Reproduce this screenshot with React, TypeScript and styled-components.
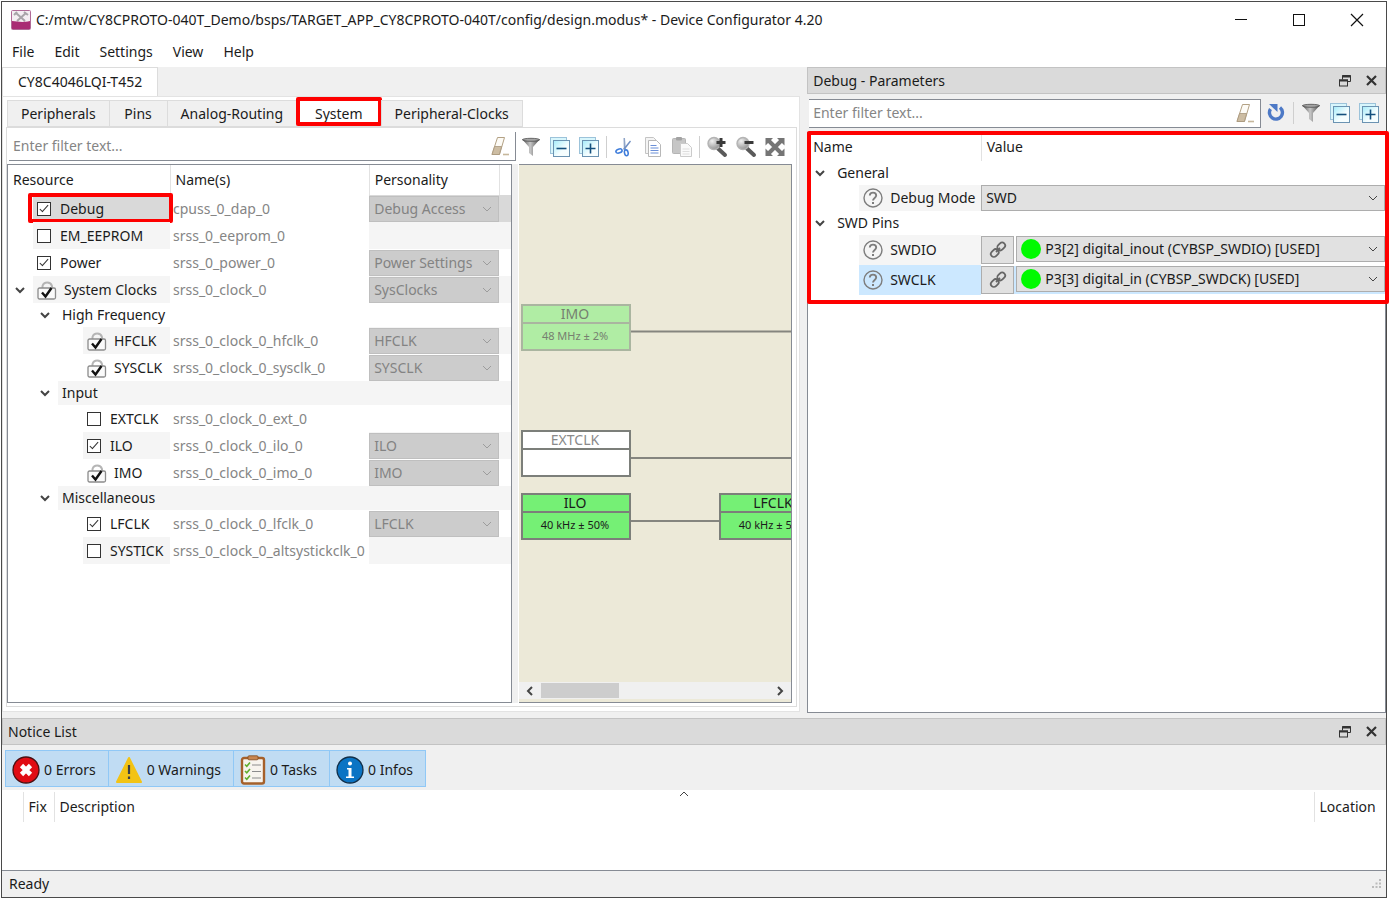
import React from "react";
import styled, { createGlobalStyle, css } from "styled-components";

const GlobalStyle = createGlobalStyle`
  *, *::before, *::after { box-sizing: border-box; }
  body { margin: 0; background: #fff; }
  body, button, input, select, table {
    font-family: "Noto Sans", "Open Sans", sans-serif;
    font-size: 14px;
    line-height: 20px;
    color: #1b1b1b;
  }
  button { border: 0; padding: 0; background: none; cursor: default; }
  table { border-collapse: collapse; border-spacing: 0; }
  td, th { padding: 0; text-align: left; font-weight: 400; }
  svg { display: block; flex: none; }
`;

/* ---------- Window frame ---------- */

const Page = styled.div`
  min-height: 100vh;
  padding: 1px 3px 1px 1px;
  display: flex;
`;
const AppWindow = styled.div`
  flex: 1;
  min-width: 0;
  display: flex;
  flex-direction: column;
  border: 1px solid #4a4a4a;
  background: #f0f0f0;
`;
const TitleBar = styled.header`
  display: flex;
  align-items: center;
  height: 36px;
  padding-left: 9px;
  background: #fff;
`;
const WindowTitle = styled.h1`
  flex: 1;
  margin: 0 0 0 5px;
  font-size: 14px;
  font-weight: 400;
  white-space: nowrap;
`;
const WindowButton = styled.button`
  width: 58px;
  height: 36px;
  display: grid;
  place-items: center;
`;
const MenuBar = styled.nav`
  display: flex;
  height: 29px;
  background: #fff;
`;
const MenuItem = styled.button`
  padding: 0 10px 2px;
`;
const Workspace = styled.main`
  flex: 1;
  display: flex;
  gap: 7px;
  min-height: 0;
`;

/* ---------- Left side ---------- */

const DevicePane = styled.section`
  flex: 797 1 0;
  min-width: 0;
  display: flex;
  flex-direction: column;
`;
const DeviceTabs = styled.div`
  display: flex;
  height: 29px;
`;
const DeviceTab = styled.button`
  padding: 0 15px;
  background: #fff;
  border: 1px solid #dcdcdc;
  border-bottom: 0;
`;
const DeviceBody = styled.div`
  flex: 1;
  display: flex;
  flex-direction: column;
  padding: 3px 2px 4px 3px;
  margin-bottom: 6px;
  background: #fff;
  border: 1px solid #e3e3e3;
`;
const SectionTabs = styled.div`
  display: flex;
  height: 27px;
  padding-left: 1px;
`;
const SectionTab = styled.button<{ $active?: boolean }>`
  position: relative;
  min-width: 58px;
  padding: 0 13px;
  border: 1px solid #dcdcdc;
  border-right-width: 0;
  background: ${(p) => (p.$active ? "#fff" : "#f0f0f0")};
  &:last-child { border-right-width: 1px; }
  ${(p) =>
    p.$active &&
    css`
      padding: 0 18px;
      &::after {
        content: "";
        position: absolute;
        inset: -4px -1px 0;
        border: 4px solid #fe0000;
        border-radius: 2px;
      }
    `}
`;
const SectionBody = styled.div`
  flex: 1;
  display: flex;
  flex-direction: column;
  padding: 4px 4px 3px 0;
  border: 1px solid #dcdcdc;
`;
const FilterRow = styled.div`
  display: flex;
  align-items: center;
  padding: 0 3px 0 2px;
`;
const FilterBox = styled.div`
  flex: 1;
  min-width: 0;
  display: flex;
  align-items: center;
  height: 29px;
  padding: 0 5px 0 4px;
  background: #fff;
  border-right: 1px solid #868b94;
  border-bottom: 1px solid #868b94;
`;
const BorderedFilterBox = styled(FilterBox)`
  border-top: 1px solid #868b94;
`;
const FilterInput = styled.input`
  flex: 1;
  min-width: 0;
  padding: 0;
  border: 0;
  outline: 0;
  background: transparent;
  &::placeholder { color: #858585; opacity: 1; }
`;
const ToolButton = styled.button`
  width: 29px;
  height: 29px;
  display: grid;
  place-items: center;
`;
const ToolDivider = styled.span`
  width: 6px;
  height: 22px;
  display: flex;
  justify-content: center;
  &::before { content: ""; width: 1px; background: #cfcfcf; }
`;
const SplitRow = styled.div`
  flex: 1;
  display: flex;
  margin-top: 3px;
`;
const ResourcePane = styled.div`
  flex: 505 1 0;
  min-width: 0;
  background: #fff;
  border: 1px solid #868b94;
`;
const Splitter = styled.div`
  width: 6px;
  margin-right: 1px;
  background: #f0f0f0;
`;

/* ---------- Trees ---------- */

const TreeTable = styled.table`
  width: 100%;
  table-layout: fixed;
`;
const Head = styled.th<{ $h: number }>`
  position: relative;
  height: ${(p) => p.$h}px;
  padding: 0 5px;
  border-right: 1px solid #e2e2e2;
  &:last-child { border-right: 0; }
`;
const Row = styled.tr<{ $h: number }>`
  height: ${(p) => p.$h}px;
`;
const Tree = styled.div<{ $h: number }>`
  position: relative;
  display: flex;
  height: ${(p) => p.$h}px;
`;
const Indent = styled.span<{ $w: number }>`
  width: ${(p) => p.$w}px;
  display: flex;
  align-items: center;
  justify-content: flex-end;
  padding-right: 8px;
`;
const NameLabel = styled.label<{ $bg: string; $gap: number }>`
  flex: 1;
  display: flex;
  align-items: center;
  gap: ${(p) => p.$gap}px;
  padding-left: 4px;
  background: ${(p) => p.$bg};
  white-space: nowrap;
`;
const Highlight = styled.span`
  position: absolute;
  inset: -2px -3px -1px 20px;
  border: 4px solid #fe0000;
  border-radius: 2px;
  pointer-events: none;
`;
const NameCell = styled.td`
  padding-left: 3px;
  color: #858585;
  white-space: nowrap;
`;
const Shade = styled.td<{ $bg: string }>`
  background: ${(p) => p.$bg};
`;
const CheckBox = styled.input`
  appearance: none;
  position: relative;
  flex: none;
  width: 14px;
  height: 14px;
  margin: 0;
  border: 1px solid #333;
  background: #fff;
  &:checked::after {
    content: "";
    position: absolute;
    left: 4px;
    top: 0;
    width: 4px;
    height: 9px;
    border: solid #333;
    border-width: 0 1px 1px 0;
    transform: rotate(42deg);
  }
`;
const LockSlot = styled.span`
  display: grid;
  & > * { grid-area: 1 / 1; }
  input { margin: 0; opacity: 0; width: 20px; height: 20px; }
`;
const SelectBox = styled.div<{ $off?: boolean; $h: number }>`
  display: flex;
  align-items: center;
  flex: 1;
  min-width: 0;
  height: ${(p) => p.$h}px;
  padding: 0 6px 0 4px;
  border: 1px solid ${(p) => (p.$off ? "#bfbfbf" : "#adadad")};
  background: ${(p) => (p.$off ? "#cccccc" : "#e1e1e1")};
`;
const PlainSelect = styled.select`
  appearance: none;
  flex: 1;
  min-width: 0;
  padding: 0;
  border: 0;
  background: transparent;
  opacity: 1;
  &:disabled { color: #838383; opacity: 1; }
`;

/* ---------- Diagram ---------- */

const DiagramPane = styled.div`
  flex: 273 1 0;
  min-width: 0;
  display: flex;
  flex-direction: column;
  padding-bottom: 3px;
  background: #ece9d8;
  border: solid #868b94;
  border-width: 1px 1px 1px 0;
`;
const Canvas = styled.div`
  flex: 1;
  overflow: hidden;
`;
const ScrollBar = styled.div`
  display: flex;
  align-items: center;
  height: 17px;
  background: #f0f0f0;
`;
const ScrollButton = styled.button`
  width: 22px;
  height: 17px;
  display: grid;
  place-items: center;
`;
const ScrollTrack = styled.div`
  flex: 1;
  height: 15px;
`;
const ScrollThumb = styled.div`
  width: 34%;
  height: 15px;
  background: #cdcdcd;
`;

/* ---------- Docks ---------- */

const ParamDock = styled.aside`
  flex: 578 1 0;
  min-width: 0;
  display: flex;
  flex-direction: column;
  margin-bottom: 5px;
`;
const DockTitle = styled.div`
  display: flex;
  align-items: center;
  height: 27px;
  padding: 0 1px 0 5px;
  border: 1px solid #c3c3c3;
  background: #dadada;
`;
const DockName = styled.h2`
  flex: 1;
  margin: 0;
  font-size: 14px;
  font-weight: 400;
`;
const DockButton = styled.button`
  width: 26px;
  height: 25px;
  display: grid;
  place-items: center;
`;
const ParamToolbar = styled.div`
  display: flex;
  align-items: center;
  height: 38px;
  padding: 0 3px 0 2px;
`;
const ParamBody = styled.div`
  flex: 1;
  background: #fff;
  border: 1px solid #868b94;
`;
const ParamMarked = styled.div`
  position: relative;
  height: 171px;
  &::after {
    content: "";
    position: absolute;
    inset: -2px -4px 0 -1px;
    border: 4px solid #fe0000;
    border-radius: 2px;
    pointer-events: none;
  }
`;
const ValueRow = styled.div<{ $bg?: string }>`
  display: flex;
  gap: 2px;
  background: ${(p) => p.$bg || "transparent"};
`;
const LinkButton = styled.button`
  width: 33px;
  height: 28px;
  display: grid;
  place-items: center;
  border: 1px solid #adadad;
  background: #e1e1e1;
`;
const Dot = styled.span`
  width: 20px;
  height: 20px;
  margin-right: 4px;
  border-radius: 50%;
  background: #00fa00;
`;

const NoticeDock = styled.section`
  background: #f0f0f0;
`;
const NoticeTools = styled.div`
  display: flex;
  height: 45px;
  padding: 5px 3px 3px;
`;
const NoticeButton = styled.button`
  display: flex;
  align-items: center;
  gap: 4px;
  padding: 3px 12px 0 6px;
  border: 1px solid #90c8f6;
  border-right-width: 0;
  background: #c0dcf3;
  &:last-child { border-right-width: 1px; }
`;
const NoticeBody = styled.div`
  height: 81px;
  padding-top: 2px;
  background: #fff;
  border-bottom: 1px solid #868b94;
`;
const SortMark = styled.span`
  position: absolute;
  left: calc(50% - 5px);
  top: -3px;
`;
const StatusBar = styled.footer`
  display: flex;
  align-items: center;
  justify-content: space-between;
  height: 26px;
  padding: 0 4px 0 7px;
`;

/* ---------- Icons ---------- */

const Chevron = ({ color = "#444", w = 2, dir = "down" }: { color?: string; w?: number; dir?: string }) => {
  const paths: Record<string, string> = {
    down: "M1 3l4 4 4-4",
    up: "M1 7l4-4 4 4",
    left: "M7 1L3 5l4 4",
    right: "M3 1l4 4-4 4",
  };
  return (
    <svg width="10" height="10" viewBox="0 0 10 10" fill="none" stroke={color} strokeWidth={w}>
      <path d={paths[dir]} />
    </svg>
  );
};

const AppIcon = () => (
  <svg width="20" height="20" viewBox="0 0 20 20">
    <rect x="0.5" y="0.5" width="19" height="19" rx="1" fill="#f4eef2" stroke="#b06a97" />
    <path d="M5 3l9 8M15 3l-9 8" stroke="#a8a4a8" strokeWidth="2" />
    <path d="M3 5l3-3M13 2l4 3" stroke="#a8a4a8" strokeWidth="2" />
    <path d="M1 11c5 0 9 2 18 0v8H1z" fill="#a92c74" />
  </svg>
);

const Eraser = () => (
  <svg width="20" height="20" viewBox="0 0 20 20">
    <path d="M7.500 1.500h7l-5 17h-7.500z" fill="#fdfbf6" stroke="#b3a184" />
    <path d="M4.600 10.500h7L9.300 18.500h-7.300z" fill="#cdbda3" stroke="#a8977c" strokeWidth=".8" />
    <path d="M13 18.500h6" stroke="#c7b79c" strokeWidth="1.600" />
  </svg>
);

const Funnel = () => (
  <svg width="20" height="20" viewBox="0 0 20 20">
    <defs>
      <linearGradient id="funnel" x1="0" x2="1">
        <stop offset="0" stopColor="#4a4a4a" />
        <stop offset=".45" stopColor="#c8c8c8" />
        <stop offset="1" stopColor="#444" />
      </linearGradient>
    </defs>
    <path d="M1 2h18l-7 8v9l-4-3v-6z" fill="url(#funnel)" />
    <ellipse cx="10" cy="2.800" rx="8.500" ry="1.500" fill="#a5a5a5" stroke="#4d4d4d" strokeWidth=".8" />
  </svg>
);

const Stack = ({ plus }: { plus?: boolean }) => (
  <svg width="20" height="20" viewBox="0 0 20 20">
    <defs>
      <linearGradient id="stack" x1="0" y1="0" x2="1" y2="1">
        <stop offset="0" stopColor="#a5ecfa" />
        <stop offset=".6" stopColor="#f6feff" />
      </linearGradient>
    </defs>
    <rect x="0.500" y="0.500" width="16" height="16" fill="#d8f6fc" stroke="#9cc3da" />
    <rect x="3.500" y="3.500" width="16" height="16" fill="url(#stack)" stroke="#6b93b2" />
    <path d={plus ? "M6.500 11.500h10M11.500 6.500v10" : "M6.500 11.500h10"} stroke="#14507e" strokeWidth="1.600" />
  </svg>
);

const Scissors = () => (
  <svg width="20" height="20" viewBox="0 0 20 20" fill="none">
    <path d="M9.500 1l1.500 0 .8 11-2 1z" fill="#8fa5c8" />
    <path d="M17 4.500l-6.500 8.500-1.500-1L16 3.500z" fill="#7290c2" />
    <ellipse cx="5" cy="14" rx="3.200" ry="1.900" transform="rotate(-20 5 14)" stroke="#3f7ddb" strokeWidth="1.600" />
    <ellipse cx="12.300" cy="15.800" rx="1.800" ry="3" transform="rotate(-12 12.300 15.800)" stroke="#3f7ddb" strokeWidth="1.600" />
  </svg>
);

const Copy = () => (
  <svg width="20" height="20" viewBox="0 0 20 20">
    <path d="M2.500 .5h8l3 3v13h-11z" fill="#f4f4f4" stroke="#c4c4c4" />
    <path d="M5.500 3.500h8l4 4v12h-12z" fill="#fff" stroke="#b8b8b8" />
    <path d="M7.500 8.500h6M7.500 11h8M7.500 13.500h8M7.500 16h8" stroke="#6b8fd8" strokeWidth="1.200" />
  </svg>
);

const Paste = () => (
  <svg width="20" height="20" viewBox="0 0 20 20">
    <rect x="0.500" y="1.500" width="13" height="15" rx="1" fill="#c6c6c6" stroke="#b5b5b5" />
    <rect x="4" y="0" width="6" height="3.500" rx="1" fill="#a2a2a2" />
    <path d="M8.500 6.500h7l4 4v9h-11z" fill="#fafafa" stroke="#cbcbcb" />
    <path d="M10.500 12h7M10.500 14.500h7M10.500 17h7" stroke="#dedede" />
  </svg>
);

const Zoom = ({ plus }: { plus?: boolean }) => (
  <svg width="22" height="22" viewBox="0 0 22 22">
    <defs>
      <radialGradient id="lens" cx=".35" cy=".3" r=".8">
        <stop offset="0" stopColor="#f0f0f0" />
        <stop offset="1" stopColor="#8b8b8b" />
      </radialGradient>
    </defs>
    <path d="M12 12.500l7 6.500" stroke="#5a5a5a" strokeWidth="4" strokeLinecap="round" />
    <circle cx="8" cy="7.500" r="6" fill="url(#lens)" stroke="#b4b4b4" strokeWidth="1.400" />
    <path d={plus ? "M10.500 6.500h9M15 2v9" : "M9.500 6.500h9"} stroke="#3a3a3a" strokeWidth="3" />
  </svg>
);

const Fit = () => (
  <svg width="20" height="20" viewBox="0 0 20 20">
    <path d="M4 4l12 12M16 4L4 16" stroke="#757575" strokeWidth="4" />
    <path d="M0.500 1h7.500l-7.500 7.500zM19.500 1v7.500L12 1zM.5 19v-7.500L8 19zM19.500 19H12l7.500-7.500z" fill="#757575" />
  </svg>
);

const Refresh = () => (
  <svg width="20" height="20" viewBox="0 0 20 20">
    <path d="M4.500 6a6.500 6.500 0 1 0 9.500-1.500" fill="none" stroke="#4d79c6" strokeWidth="3.400" />
    <path d="M3 1h8.500v8z" fill="#4d79c6" />
  </svg>
);

const Restore = () => (
  <svg width="12" height="12" viewBox="0 0 12 12" fill="none" stroke="#333">
    <path d="M3.500 4.500v-4h8v6h-3" />
    <path d="M3 1.500h9" strokeWidth="2" />
    <rect x="0.500" y="5" width="8" height="6" fill="#dadada" />
    <path d="M0 5.500h9" strokeWidth="2" />
  </svg>
);

const CloseX = () => (
  <svg width="11" height="11" viewBox="0 0 11 11" stroke="#333" strokeWidth="2.200">
    <path d="M1 1l9 9M10 1l-9 9" />
  </svg>
);

const LockCheck = () => (
  <svg width="20" height="20" viewBox="0 0 20 20" fill="none">
    <path d="M5.500 9V6a5 5 0 0 1 9.500 0v3" stroke="#b5b5b5" strokeWidth="2" />
    <rect x="1" y="8" width="17.500" height="11" rx="1.500" fill="#fafafa" stroke="#8c8c8c" strokeWidth="1.300" />
    <path d="M5 12.500l3.500 4L14.500 8" stroke="#111" strokeWidth="2.400" />
  </svg>
);

const Help = () => (
  <svg width="20" height="20" viewBox="0 0 20 20" fill="none" stroke="#7d7d7d">
    <circle cx="10" cy="10" r="9" strokeWidth="1.400" />
    <path d="M6.800 7.600c0-4 6.400-4 6.400 0 0 2.400-3.200 2.400-3.200 5" strokeWidth="1.900" />
    <path d="M10 14v2" strokeWidth="2" />
  </svg>
);

const Chain = () => (
  <svg width="18" height="18" viewBox="0 0 18 18" fill="none" stroke="#666" strokeWidth="1.800">
    <rect x="8" y="2.500" width="8.500" height="6" rx="3" transform="rotate(-45 12.200 5.500)" />
    <rect x="1.500" y="9" width="8.500" height="6" rx="3" transform="rotate(-45 5.800 12)" />
    <path d="M7 11l4-4" />
  </svg>
);

const ErrorIcon = () => (
  <svg width="28" height="28" viewBox="0 0 28 28">
    <circle cx="14" cy="14" r="13" fill="#e00c14" stroke="#4a1012" strokeWidth="1.300" />
    <path d="M9.500 9.500l9 9M18.500 9.500l-9 9" stroke="#fff" strokeWidth="4.600" />
  </svg>
);

const WarningIcon = () => (
  <svg width="28" height="28" viewBox="0 0 28 28">
    <path d="M14 2L26 26H2z" fill="#f3c313" stroke="#f3c313" strokeWidth="2" strokeLinejoin="round" />
    <path d="M14 9v9M14 20.500v2.500" stroke="#3a3f45" strokeWidth="2.200" />
  </svg>
);

const TaskIcon = () => (
  <svg width="26" height="30" viewBox="0 0 26 30">
    <rect x="2" y="3" width="22" height="25.500" rx="2" fill="#f7f4ee" stroke="#a5602a" strokeWidth="2.400" />
    <rect x="8" y="0.800" width="10" height="4" rx="1" fill="#c9864f" stroke="#7f4a20" strokeWidth=".8" />
    <path d="M12 10h9M12 16.500h9M12 23h9" stroke="#8c8c8c" strokeWidth="1.200" />
    <path d="M5 9.500l1.800 1.800L10 7.500M5 16l1.800 1.800L10 14M5 22.500l1.800 1.800L10 20.500" fill="none" stroke="#5fae2e" strokeWidth="1.600" />
  </svg>
);

const InfoIcon = () => (
  <svg width="28" height="28" viewBox="0 0 28 28">
    <circle cx="14" cy="14" r="13" fill="#0b74c4" stroke="#12304a" strokeWidth="1.300" />
    <circle cx="14" cy="7.500" r="2" fill="#fff" />
    <path d="M11 12h4.500v8.500H18V22h-8v-1.500h2.500v-7H11z" fill="#fff" />
  </svg>
);

const Grip = () => (
  <svg width="10" height="10" viewBox="0 0 10 10" fill="#bcbcbc">
    <path d="M7 0h2v2H7zM7 3.500h2v2H7zM7 7h2v2H7zM3.500 3.500h2v2h-2zM3.500 7h2v2h-2zM0 7h2v2H0z" />
  </svg>
);

/* ---------- Data ---------- */

type Resource = {
  name: string;
  kind: "group" | "check" | "lock";
  indent: number;
  open?: boolean;
  checked?: boolean;
  selected?: boolean;
  alias?: string;
  personality?: string;
};

const resources: Resource[] = [
  { name: "Debug", kind: "check", indent: 25, checked: true, selected: true, alias: "cpuss_0_dap_0", personality: "Debug Access" },
  { name: "EM_EEPROM", kind: "check", indent: 25, alias: "srss_0_eeprom_0" },
  { name: "Power", kind: "check", indent: 25, checked: true, alias: "srss_0_power_0", personality: "Power Settings" },
  { name: "System Clocks", kind: "lock", indent: 25, open: true, alias: "srss_0_clock_0", personality: "SysClocks" },
  { name: "High Frequency", kind: "group", indent: 50, open: true },
  { name: "HFCLK", kind: "lock", indent: 75, alias: "srss_0_clock_0_hfclk_0", personality: "HFCLK" },
  { name: "SYSCLK", kind: "lock", indent: 75, alias: "srss_0_clock_0_sysclk_0", personality: "SYSCLK" },
  { name: "Input", kind: "group", indent: 50, open: true },
  { name: "EXTCLK", kind: "check", indent: 75, alias: "srss_0_clock_0_ext_0" },
  { name: "ILO", kind: "check", indent: 75, checked: true, alias: "srss_0_clock_0_ilo_0", personality: "ILO" },
  { name: "IMO", kind: "lock", indent: 75, alias: "srss_0_clock_0_imo_0", personality: "IMO" },
  { name: "Miscellaneous", kind: "group", indent: 50, open: true },
  { name: "LFCLK", kind: "check", indent: 75, checked: true, alias: "srss_0_clock_0_lfclk_0", personality: "LFCLK" },
  { name: "SYSTICK", kind: "check", indent: 75, alias: "srss_0_clock_0_altsystickclk_0" },
];

/* Names of the rows that carry the alternate stripe. */
const striped = ["EM_EEPROM", "System Clocks", "HFCLK", "Input", "ILO", "Miscellaneous", "SYSTICK"];

const ResourceRow = ({ r }: { r: Resource }) => {
  const bg = r.selected ? "#d9d9d9" : striped.includes(r.name) ? "#f5f5f5" : "#ffffff";
  if (r.kind === "group") {
    return (
      <Row $h={24}>
        <td colSpan={4}>
          <Tree $h={24}>
            <Indent $w={r.indent}><Chevron /></Indent>
            <NameLabel as="span" $bg={bg} $gap={0}>{r.name}</NameLabel>
          </Tree>
        </td>
      </Row>
    );
  }
  return (
    <Row $h={27}>
      <td>
        <Tree $h={27}>
          <Indent $w={r.indent}>{r.open && <Chevron />}</Indent>
          <NameLabel $bg={bg} $gap={r.kind === "lock" ? 7 : 9}>
            {r.kind === "lock" ? (
              <LockSlot>
                <LockCheck />
                <input type="checkbox" defaultChecked disabled />
              </LockSlot>
            ) : (
              <CheckBox type="checkbox" defaultChecked={r.checked} />
            )}
            {r.name}
          </NameLabel>
          {r.selected && <Highlight />}
        </Tree>
      </td>
      <NameCell>{r.alias}</NameCell>
      <Shade $bg={bg}>
        {r.personality && (
          <SelectBox $off $h={26}>
            <PlainSelect disabled aria-label={`${r.name} personality`}>
              <option>{r.personality}</option>
            </PlainSelect>
            <Chevron color="#9c9c9c" w={1} />
          </SelectBox>
        )}
      </Shade>
      <Shade $bg={bg} />
    </Row>
  );
};

type NodeProps = { x: number; y: number; title: string; sub?: string; fill: string; line?: string; text?: string };
const ClockNode = ({ x, y, title, sub, fill, line = "#7c7f7a", text = "#1b1b1b" }: NodeProps) => (
  <g>
    <rect x={x} y={y} width="108" height="45" fill={fill} stroke={line} strokeWidth="2" />
    <path d={`M${x} ${y + 18}h108`} stroke={line} strokeWidth="2" />
    <text x={x + 53} y={y + 14} textAnchor="middle" fontSize="14" fill={text}>{title}</text>
    {sub && <text x={x + 53} y={y + 35} textAnchor="middle" fontSize="11" fill={text}>{sub}</text>}
  </g>
);

const ParamGroup = ({ name }: { name: string }) => (
  <Row $h={24}>
    <td colSpan={2}>
      <Tree $h={24}>
        <Indent $w={25}><Chevron /></Indent>
        <NameLabel as="span" $bg="#fff" $gap={0}>{name}</NameLabel>
      </Tree>
    </td>
  </Row>
);

const PinRow = ({ name, value, selected }: { name: string; value: string; selected?: boolean }) => (
  <Row $h={30}>
    <td>
      <Tree $h={30}>
        <Indent $w={51} />
        <NameLabel htmlFor={name} $bg={selected ? "#cce8ff" : "#f5f5f5"} $gap={7}>
          <Help />
          {name}
        </NameLabel>
      </Tree>
    </td>
    <td>
      <ValueRow $bg={selected ? "#cce8ff" : "transparent"}>
        <LinkButton aria-label={`Go to ${name} pin`}><Chain /></LinkButton>
        <SelectBox $h={26}>
          <Dot />
          <PlainSelect id={name}><option>{value}</option></PlainSelect>
          <Chevron w={1} />
        </SelectBox>
      </ValueRow>
    </td>
  </Row>
);

const DockControls = () => (
  <>
    <DockButton aria-label="Float"><Restore /></DockButton>
    <DockButton aria-label="Close panel"><CloseX /></DockButton>
  </>
);

export default function App() {
  return (
    <Page>
      <GlobalStyle />
      <AppWindow>
        <TitleBar>
          <AppIcon />
          <WindowTitle>
            C:/mtw/CY8CPROTO-040T_Demo/bsps/TARGET_APP_CY8CPROTO-040T/config/design.modus* - Device Configurator 4.20
          </WindowTitle>
          <WindowButton aria-label="Minimize">
            <svg width="14" height="14" stroke="#111"><path d="M1 6.500h12" /></svg>
          </WindowButton>
          <WindowButton aria-label="Maximize">
            <svg width="14" height="14" fill="none" stroke="#111"><rect x="1.500" y="1.500" width="11" height="11" /></svg>
          </WindowButton>
          <WindowButton aria-label="Close">
            <svg width="14" height="14" stroke="#111" strokeWidth="1.200"><path d="M1 1l12 12M13 1L1 13" /></svg>
          </WindowButton>
        </TitleBar>
        <MenuBar>
          {["File", "Edit", "Settings", "View", "Help"].map((m) => <MenuItem key={m}>{m}</MenuItem>)}
        </MenuBar>

        <Workspace>
          <DevicePane>
            <DeviceTabs><DeviceTab>CY8C4046LQI-T452</DeviceTab></DeviceTabs>
            <DeviceBody>
              <SectionTabs>
                {["Peripherals", "Pins", "Analog-Routing", "System", "Peripheral-Clocks"].map((t) => (
                  <SectionTab key={t} $active={t === "System"}>{t}</SectionTab>
                ))}
              </SectionTabs>
              <SectionBody>
                <FilterRow>
                  <FilterBox>
                    <FilterInput placeholder="Enter filter text..." aria-label="Filter resources" />
                    <Eraser />
                  </FilterBox>
                  <ToolButton aria-label="Filter"><Funnel /></ToolButton>
                  <ToolButton aria-label="Collapse all"><Stack /></ToolButton>
                  <ToolButton aria-label="Expand all"><Stack plus /></ToolButton>
                  <ToolDivider />
                  <ToolButton aria-label="Cut"><Scissors /></ToolButton>
                  <ToolButton aria-label="Copy"><Copy /></ToolButton>
                  <ToolButton aria-label="Paste"><Paste /></ToolButton>
                  <ToolDivider />
                  <ToolButton aria-label="Zoom in"><Zoom plus /></ToolButton>
                  <ToolButton aria-label="Zoom out"><Zoom /></ToolButton>
                  <ToolButton aria-label="Zoom to fit"><Fit /></ToolButton>
                </FilterRow>
                <SplitRow>
                  <ResourcePane>
                    <TreeTable>
                      <colgroup>
                        <col width="162" />
                        <col />
                        <col width="130" />
                        <col width="12" />
                      </colgroup>
                      <thead>
                        <tr>
                          <Head $h={30}>Resource</Head>
                          <Head $h={30}>Name(s)</Head>
                          <Head $h={30}>Personality</Head>
                          <Head $h={30} />
                        </tr>
                      </thead>
                      <tbody>
                        {resources.map((r) => <ResourceRow key={r.name} r={r} />)}
                      </tbody>
                    </TreeTable>
                  </ResourcePane>
                  <Splitter />
                  <DiagramPane>
                    <Canvas>
                      <svg width="400" height="400">
                        <path d="M112 166.500h288M112 293h288M112 356h88" stroke="#85857f" strokeWidth="2" />
                        <ClockNode x={3} y={140} title="IMO" sub="48 MHz ± 2%" fill="#b0eda4" line="#aab5a0" text="#768070" />
                        <ClockNode x={3} y={266} title="EXTCLK" fill="#fff" text="#8a8a8a" />
                        <ClockNode x={3} y={329} title="ILO" sub="40 kHz ± 50%" fill="#75f075" />
                        <ClockNode x={201} y={329} title="LFCLK" sub="40 kHz ± 50%" fill="#75f075" />
                      </svg>
                    </Canvas>
                    <ScrollBar>
                      <ScrollButton aria-label="Scroll left"><Chevron dir="left" /></ScrollButton>
                      <ScrollTrack><ScrollThumb /></ScrollTrack>
                      <ScrollButton aria-label="Scroll right"><Chevron dir="right" /></ScrollButton>
                    </ScrollBar>
                  </DiagramPane>
                </SplitRow>
              </SectionBody>
            </DeviceBody>
          </DevicePane>

          <ParamDock>
            <DockTitle>
              <DockName>Debug - Parameters</DockName>
              <DockControls />
            </DockTitle>
            <ParamToolbar>
              <BorderedFilterBox>
                <FilterInput placeholder="Enter filter text..." aria-label="Filter parameters" />
                <Eraser />
              </BorderedFilterBox>
              <ToolButton aria-label="Reset"><Refresh /></ToolButton>
              <ToolDivider />
              <ToolButton aria-label="Filter"><Funnel /></ToolButton>
              <ToolButton aria-label="Collapse all"><Stack /></ToolButton>
              <ToolButton aria-label="Expand all"><Stack plus /></ToolButton>
            </ParamToolbar>
            <ParamBody>
              <ParamMarked>
                <TreeTable>
                  <colgroup>
                    <col width="173" />
                    <col />
                  </colgroup>
                  <thead>
                    <tr>
                      <Head $h={28}>Name</Head>
                      <Head $h={28}>Value</Head>
                    </tr>
                  </thead>
                  <tbody>
                    <ParamGroup name="General" />
                    <Row $h={26}>
                      <td>
                        <Tree $h={26}>
                          <Indent $w={51} />
                          <NameLabel htmlFor="mode" $bg="#f5f5f5" $gap={7}><Help />Debug Mode</NameLabel>
                        </Tree>
                      </td>
                      <td>
                        <SelectBox $h={26}>
                          <PlainSelect id="mode"><option>SWD</option></PlainSelect>
                          <Chevron w={1} />
                        </SelectBox>
                      </td>
                    </Row>
                    <ParamGroup name="SWD Pins" />
                    <PinRow name="SWDIO" value="P3[2] digital_inout (CYBSP_SWDIO) [USED]" />
                    <PinRow name="SWCLK" value="P3[3] digital_in (CYBSP_SWDCK) [USED]" selected />
                  </tbody>
                </TreeTable>
              </ParamMarked>
            </ParamBody>
          </ParamDock>
        </Workspace>

        <NoticeDock>
          <DockTitle>
            <DockName>Notice List</DockName>
            <DockControls />
          </DockTitle>
          <NoticeTools>
            <NoticeButton><ErrorIcon />0 Errors</NoticeButton>
            <NoticeButton><WarningIcon />0 Warnings</NoticeButton>
            <NoticeButton><TaskIcon />0 Tasks</NoticeButton>
            <NoticeButton><InfoIcon />0 Infos</NoticeButton>
          </NoticeTools>
          <NoticeBody>
            <TreeTable>
              <colgroup>
                <col width="21" />
                <col width="31" />
                <col />
                <col width="72" />
              </colgroup>
              <thead>
                <tr>
                  <Head $h={30} />
                  <Head $h={30}>Fix</Head>
                  <Head $h={30}>Description<SortMark><Chevron dir="up" w={1} /></SortMark></Head>
                  <Head $h={30}>Location</Head>
                </tr>
              </thead>
            </TreeTable>
          </NoticeBody>
        </NoticeDock>
        <StatusBar>Ready<Grip /></StatusBar>
      </AppWindow>
    </Page>
  );
}
